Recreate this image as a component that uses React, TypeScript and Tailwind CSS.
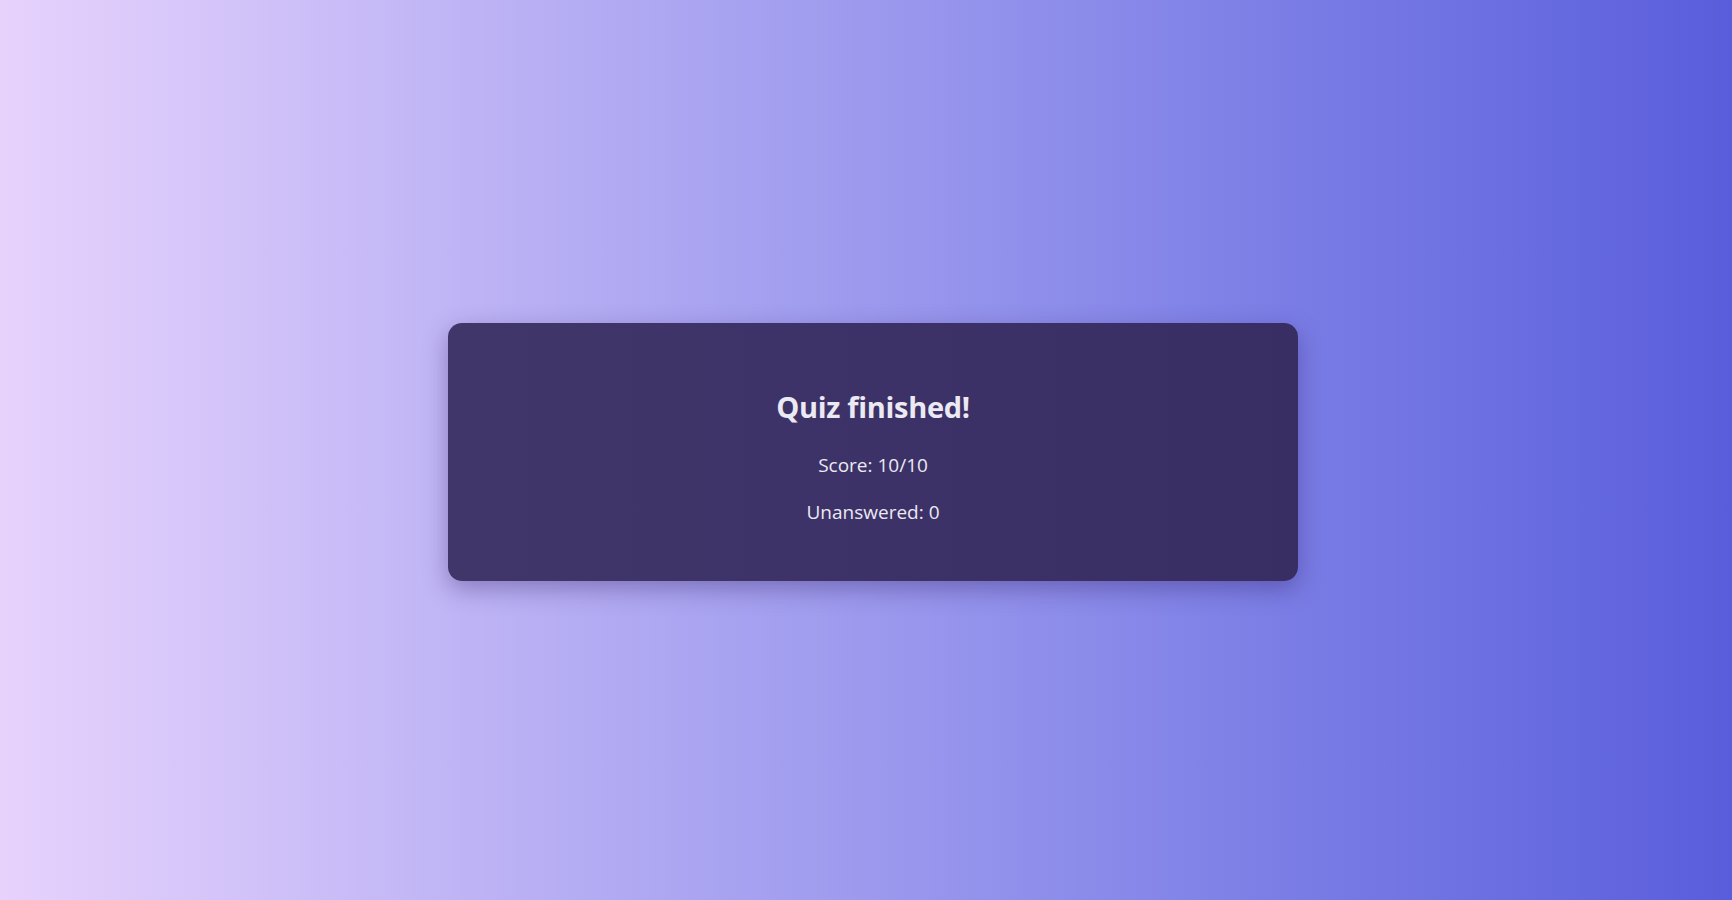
export default function App() {
  return (
    <div
      className="min-h-screen w-full flex items-center justify-center bg-gradient-to-r from-[#e7d2fc] to-[#5a5ddb] pl-[14px] pt-[4px]"
      style={{ fontFamily: '"Open Sans", "Noto Sans", sans-serif' }}
    >
      <div className="w-[850px] h-[258px] rounded-[14px] bg-gradient-to-r from-[#41366a] to-[#382e64] shadow-[0_8px_24px_rgba(40,20,90,0.35)] flex flex-col items-center pt-[66px] text-[#ebe9f2]">
        <h2 className="text-[29px] font-bold leading-[36px] tracking-[-0.3px]">Quiz finished!</h2>
        <p className="text-[19px] leading-[24px] mt-[28px]">Score: 10/10</p>
        <p className="text-[19px] leading-[24px] mt-[23px]">Unanswered: 0</p>
      </div>
    </div>
  );
}
